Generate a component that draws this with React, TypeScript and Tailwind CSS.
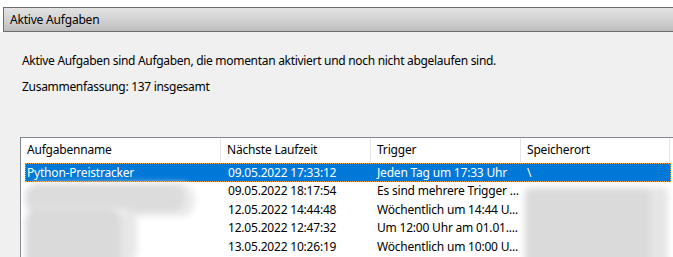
import React from "react";

const font = { fontFamily: '"Noto Sans", "Segoe UI", sans-serif' };

type Row = { name: string; next: string; trigger: string; loc: string; sel?: boolean };

const rows: Row[] = [
  { name: "Python-Preistracker", next: "09.05.2022 17:33:12", trigger: "Jeden Tag um 17:33 Uhr", loc: "\\", sel: true },
  { name: "", next: "09.05.2022 18:17:54", trigger: "Es sind mehrere Trigger ...", loc: "" },
  { name: "", next: "12.05.2022 14:44:48", trigger: "Wöchentlich um 14:44 U...", loc: "" },
  { name: "", next: "12.05.2022 12:47:32", trigger: "Um 12:00 Uhr am 01.01....", loc: "" },
  { name: "", next: "13.05.2022 10:26:19", trigger: "Wöchentlich um 10:00 U...", loc: "" },
];

export default function App() {
  return (
    <div className="w-[673px] h-[257px] overflow-hidden bg-white text-[12px] text-black" style={font}>
      <div className="pt-[7px] pl-[3px]">
        <div className="h-[25px] border-y border-l border-[#6d6d6d] bg-[linear-gradient(#e3e3e3,#d2d2d2_50%,#bdbdbd)] flex items-center pl-[6px] leading-none tracking-[-0.2px]">
          Aktive Aufgaben
        </div>
      </div>
      <div className="bg-[#f0f0f0] h-[225px] pl-[22px] pt-[21px]">
        <div className="leading-[16px] tracking-[-0.3px]">
          Aktive Aufgaben sind Aufgaben, die momentan aktiviert und noch nicht abgelaufen sind.
        </div>
        <div className="leading-[16px] mt-[10px] tracking-[-0.3px]">Zusammenfassung: 137 insgesamt</div>
        <div className="relative mt-[42px] -ml-[2px] w-[700px] h-[200px] bg-white border-t border-l border-[#828790] tracking-[-0.2px]">
          <div className="flex h-[24px] items-center">
            <div className="w-[200px] h-full flex items-center pl-[6px] border-r border-[#e5e5e5]">Aufgabenname</div>
            <div className="w-[150px] h-full flex items-center pl-[6px] border-r border-[#e5e5e5]">Nächste Laufzeit</div>
            <div className="w-[150px] h-full flex items-center pl-[6px] border-r border-[#e5e5e5]">Trigger</div>
            <div className="w-[149px] h-full flex items-center pl-[6px] border-r border-[#e5e5e5]">Speicherort</div>
          </div>
          <div className="pt-[1px] pl-[4px]">
            {rows.map((r, i) => (
              <div
                key={i}
                className={
                  r.sel
                    ? "flex h-[19px] items-center w-[646px] bg-[#0078d7] text-white outline outline-1 outline-dotted outline-[#f0a040] -outline-offset-1"
                    : "flex h-[18.5px] items-center w-[646px]"
                }
              >
                <div className="w-[200px] pl-[2px] whitespace-nowrap">{r.name}</div>
                <div className="w-[150px] pl-[3px] whitespace-nowrap">{r.next}</div>
                <div className="w-[150px] pl-[2px] whitespace-nowrap">{r.trigger}</div>
                <div className="w-[146px] pl-[2px] whitespace-nowrap">{r.loc}</div>
              </div>
            ))}
          </div>
          {/* redaction overlays */}
          <div className="absolute left-[4px] top-[45px] w-[175px] h-[80px] blur-[3px]">
            <div className="absolute left-0 top-0 w-[170px] h-[34px] rounded-[14px] bg-[#ececec]" />
            <div className="absolute left-0 top-[1px] w-[160px] h-[28px] rounded-[12px] bg-[#dcdcdc]" />
            <div className="absolute left-0 top-[24px] w-[112px] h-[60px] rounded-[16px] bg-[#e8e8e8]" />
            <div className="absolute left-0 top-[26px] w-[96px] h-[60px] rounded-[14px] bg-[#dadada]" />
          </div>
          <div className="absolute left-[503px] top-[49px] w-[144px] h-[80px] blur-[3px]">
            <div className="absolute inset-0 rounded-[6px] bg-[#e6e6e6]" />
            <div className="absolute left-[2px] top-[2px] right-[18px] bottom-0 rounded-[6px] bg-[#dadada]" />
          </div>
        </div>
      </div>
    </div>
  );
}
